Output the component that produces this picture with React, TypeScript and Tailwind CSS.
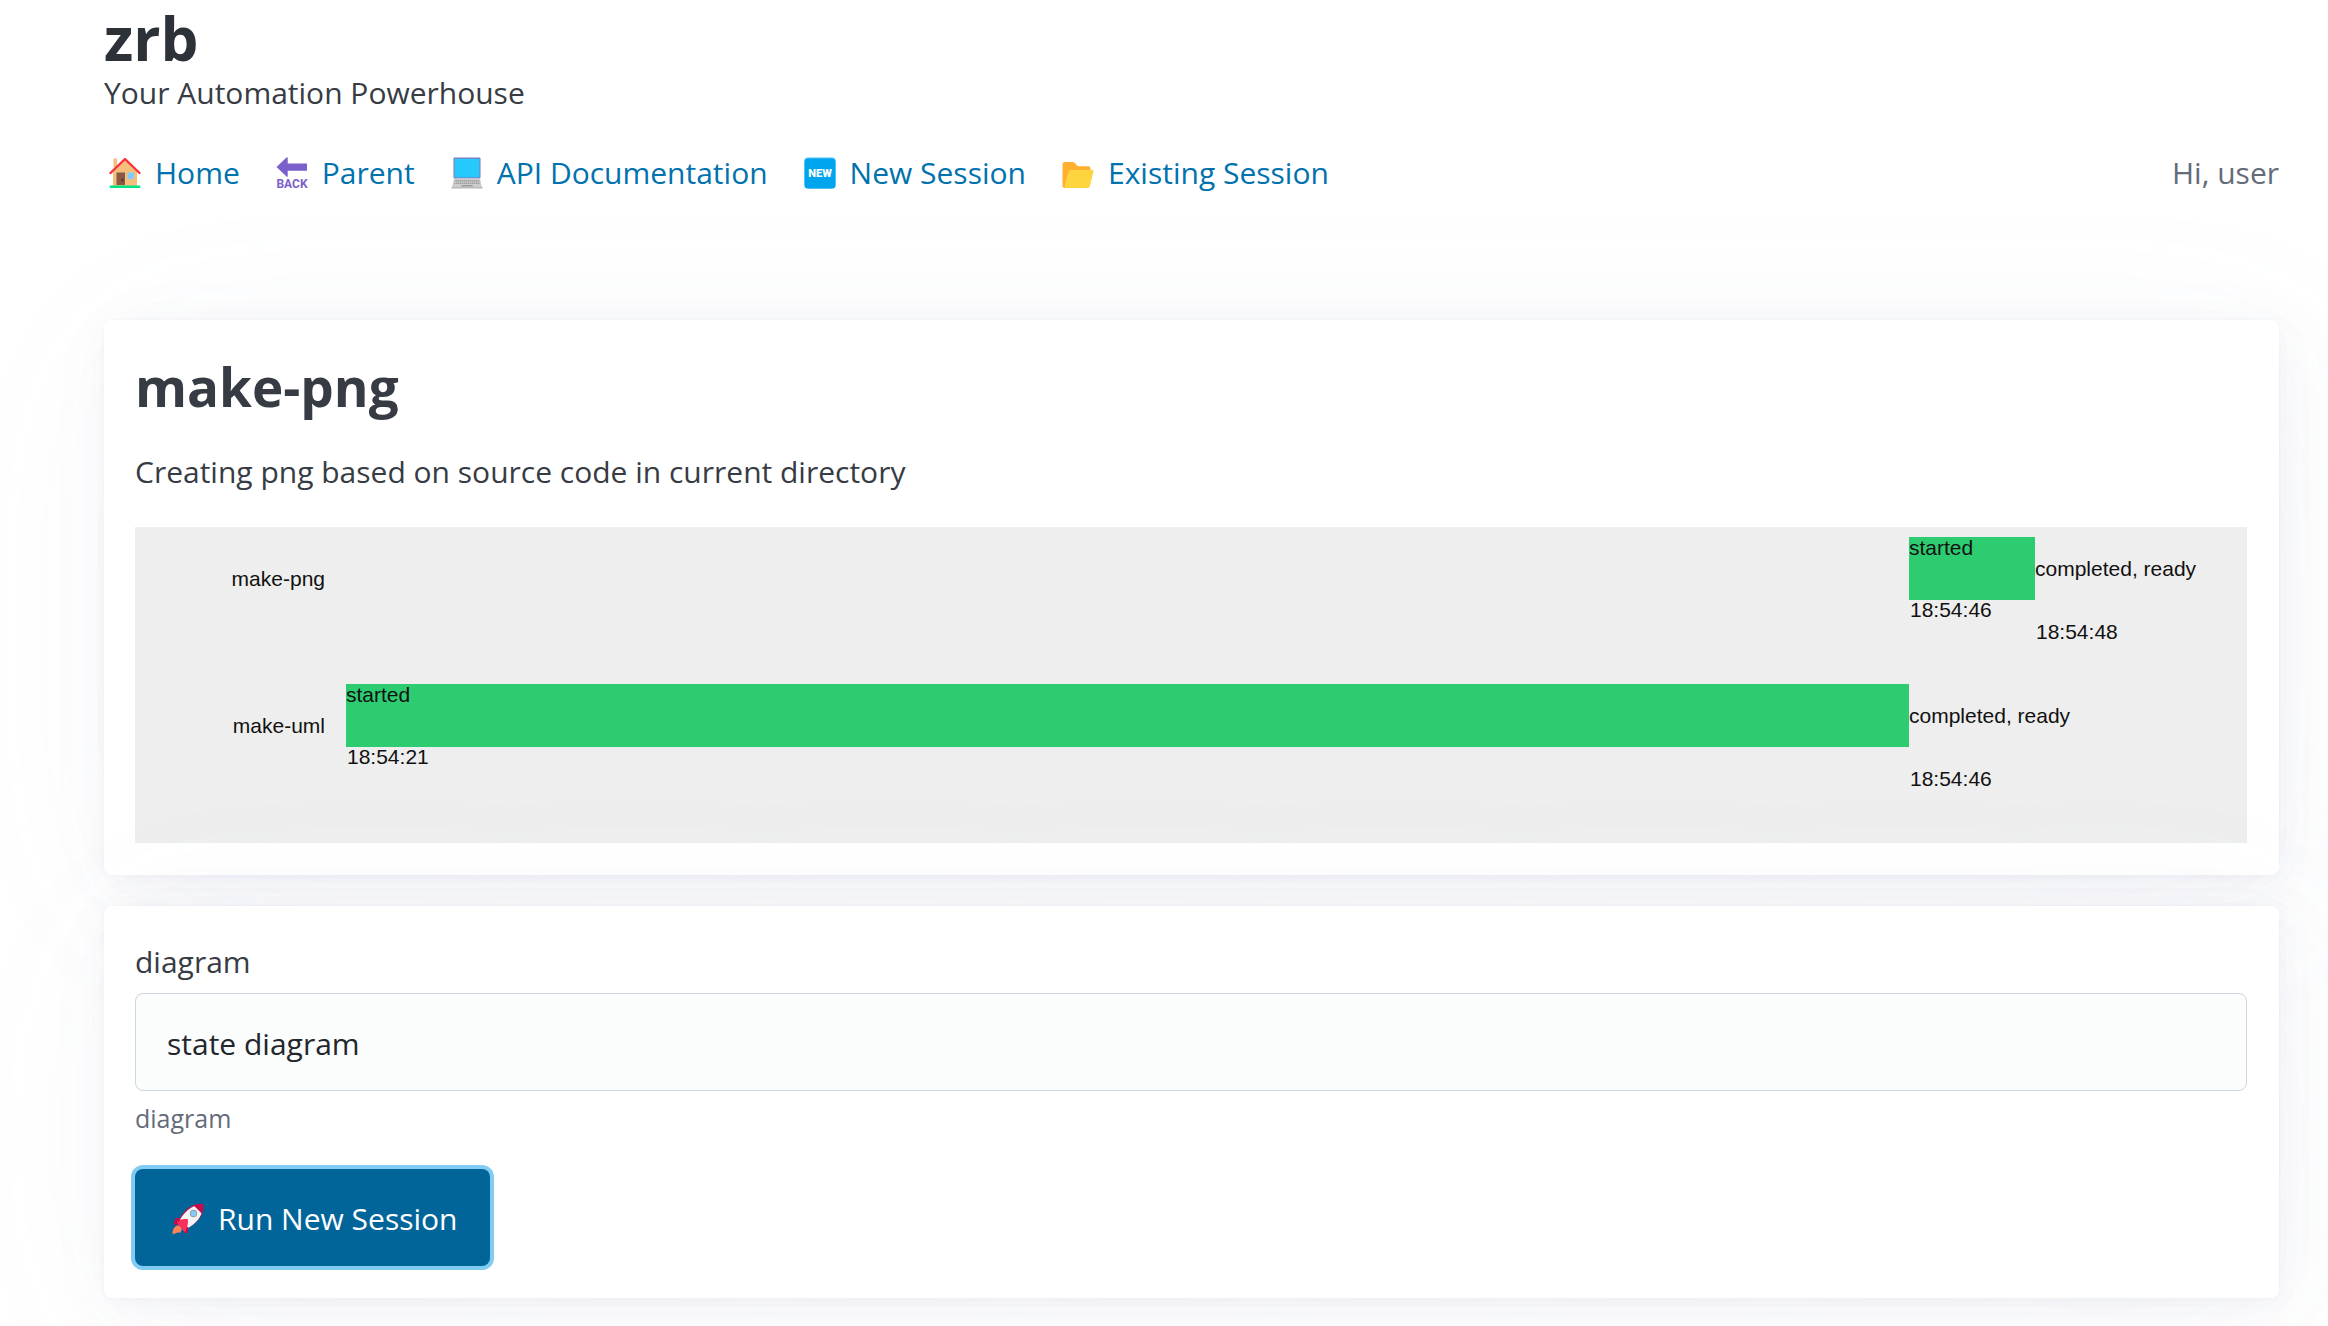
import React from "react";

const CARD =
  "rounded-lg bg-white py-8 pr-8 pl-[31px] shadow-[0_1px_5px_rgba(129,145,181,0.017),1px_2px_13px_rgba(129,145,181,0.024),2px_4px_24px_rgba(129,145,181,0.03),4px_7px_43px_rgba(129,145,181,0.036),7px_13px_79px_rgba(129,145,181,0.043),16px_32px_189px_rgba(129,145,181,0.06),0_0_0_1px_rgba(129,145,181,0.015)]";

function Icon({ children }: { children: React.ReactNode }) {
  return (
    <svg viewBox="0 0 32 32" className="mx-[5px] h-8 w-8 shrink-0 overflow-visible" aria-hidden="true">
      {children}
    </svg>
  );
}

function HomeIcon() {
  return (
    <Icon>
      <path d="M4.5 1.5h3.6v9H4.5z" fill="#f3bf7b" />
      <path d="M4 15 16 3l12 12v14H4z" fill="#f3bf7b" />
      <path d="M1.5 16 16 2l14.500 14" fill="none" stroke="#fb2f3b" strokeWidth="2.400" strokeLinecap="round" strokeLinejoin="round" />
      <path d="M7.500 15.500h8.500V28H7.500z" fill="#8b5742" />
      <path d="M12.500 21.500h2v3h-2z" fill="#5c3a2e" />
      <path d="M18.500 15.500h6.500V22h-6.500z" fill="#83cbff" />
      <rect x="0.500" y="28.500" width="31" height="2.500" rx="1.200" fill="#00e584" />
    </Icon>
  );
}

function BackIcon() {
  return (
    <Icon>
      <path d="M0.500 10 10.500 0.500q1.200-.8 1.200 0.800V6.500H31v7.200H11.700v5.200q0 1.500-1.200 0.700z" fill="#7b5fcb" />
      <text x="16" y="31" textAnchor="middle" fontFamily="Roboto, sans-serif" fontWeight="700" fontSize="12" fill="#7b5fcb">BACK</text>
    </Icon>
  );
}

function LaptopIcon() {
  return (
    <Icon>
      <rect x="2.500" y="0.500" width="27" height="21" rx="1" fill="#8374b8" />
      <path d="M3.500 1.700h25v18.800h-25z" fill="#26c9fc" />
      <path d="M3 21.800h26L31 30H1z" fill="#cdcdcd" />
      <path d="M4 23h24l.7 4H3.300z" fill="#a7a7a7" />
      <path d="M4 24.300h24M3.700 25.700h24.600" stroke="#dedede" strokeWidth="0.700" strokeDasharray="1.300 0.700" />
      <path d="M10.500 28h11l.5 1.600H10z" fill="#9b9b9b" />
      <path d="M0.500 30h31v1.500H0.500z" fill="#b9b9b9" />
    </Icon>
  );
}

function NewIcon() {
  return (
    <Icon>
      <rect x="0.500" y="0.500" width="31" height="31" rx="3.500" fill="#4cc0f8" />
      <rect x="0.500" y="1.500" width="31" height="30" rx="3.500" fill="#00a6ed" />
      <text x="16" y="19.500" textAnchor="middle" fontFamily="Roboto, sans-serif" fontWeight="900" fontSize="11" fill="#ffffff">NEW</text>
    </Icon>
  );
}

function FolderIcon() {
  return (
    <Icon>
      <path d="M0.500 7q0-2 2-2h8q1.200 0 2 .8L16 9.300h10.500q2 0 2 2V14L6 31H3q-2.500 0-2.500-2.500z" fill="#ffb02e" />
      <path d="M8.500 13h22q1.300 0 1 1.400l-3.600 14.800Q27.500 31 25.700 31H3.200q-1 0-.7-1.200L6.400 14.700Q6.800 13 8.500 13z" fill="#fcd53f" />
    </Icon>
  );
}

function RocketIcon() {
  return (
    <Icon>
      <path d="M9 23c1.500 2 0.500 6-1.500 7-1.500-.8-2.800-.2-4 .6-1-.2-2.500.8-3 .4-.3-4 2-7.500 4.500-8.500z" fill="#ff8257" />
      <path d="M10.500 15H4.500c-1.600 0-2.500 3.500-2.800 6.500l6.500 0.500z" fill="#ca0b4a" />
      <path d="M16 22.500V28c0 1.500-1 2.500-3 2.500L9.500 23z" fill="#ca0b4a" />
      <path d="M31 1.200c1.800 7.800-3 16.500-13.500 23L13 27l-7.500-7.500L8.500 14C14.500 4.500 23.500-.5 31 1.200z" fill="#ca0b4a" />
      <path d="M22.500 3.200l7 7c-2 6-6.500 10.500-13 14.500L8 16.500c4-6.500 9-11.500 14.500-13.300z" fill="#f4f4f4" />
      <path d="M5 20l3-3c3-1.200 6.500-1.200 7.800-.8.500 2.500.2 5.500-1 8L13 29.500z" fill="#fb2f5b" />
      <circle cx="21.500" cy="10.500" r="3.700" fill="#9b9b9b" />
      <circle cx="21.500" cy="10.500" r="2.800" fill="#83cbff" />
    </Icon>
  );
}

const links = [
  { label: "Home", icon: <HomeIcon /> },
  { label: "Parent", icon: <BackIcon /> },
  { label: "API Documentation", icon: <LaptopIcon /> },
  { label: "New Session", icon: <NewIcon /> },
  { label: "Existing Session", icon: <FolderIcon /> },
];

const runs = [
  { name: "make-png", top: 10, from: 1774, to: 1900, start: "18:54:46", end: "18:54:48" },
  { name: "make-uml", top: 157, from: 211, to: 1774, start: "18:54:21", end: "18:54:46" },
];

function Timeline() {
  return (
    <svg
      viewBox="0 0 2112 316"
      role="img"
      aria-label="Task timeline"
      className="mt-[31px] block w-full bg-[#eeeeee] font-['Liberation_Sans',Arial,sans-serif] text-[21px]"
    >
      {runs.map((r) => (
        <g key={r.name} fill="#111111">
          <text x="190" y={r.top + 49} textAnchor="end">{r.name}</text>
          <rect x={r.from} y={r.top} width={r.to - r.from} height="63" fill="#2ecc71" />
          <text x={r.from} y={r.top + 18}>started</text>
          <text x={r.from + 1} y={r.top + 80}>{r.start}</text>
          <text x={r.to} y={r.top + 39}>completed, ready</text>
          <text x={r.to + 1} y={r.top + 102}>{r.end}</text>
        </g>
      ))}
    </svg>
  );
}

export default function App() {
  return (
    <div className="min-h-screen bg-white pr-[49px] pb-7 pl-[104px] font-['Open_Sans','Segoe_UI',sans-serif] text-[30px] leading-[48px] text-[#373c44]">
      <header>
        <div className="pt-1">
          <h1 className="text-[60px] leading-[68px] font-bold text-[#2d3138]">zrb</h1>
          <p className="leading-[42px]">Your Automation Powerhouse</p>
        </div>
        <nav className="mt-[35px] flex items-center justify-between">
          <ul className="flex gap-[31px]">
            {links.map((l) => (
              <li key={l.label}>
                <a href="#" className="flex items-center gap-[9px] whitespace-nowrap text-[#0172ad]">
                  {l.icon}
                  {l.label}
                </a>
              </li>
            ))}
          </ul>
          <span className="text-[#646b79]">Hi, user</span>
        </nav>
      </header>

      <main className="mt-[123px] flex flex-col gap-[31px]">
        <article className={CARD}>
          <h2 className="text-[53px] leading-[70px] font-bold">make-png</h2>
          <p className="mt-[26px]">Creating png based on source code in current directory</p>
          <Timeline />
        </article>

        <article className={CARD}>
          <form onSubmit={(e) => e.preventDefault()}>
            <label htmlFor="diagram" className="block">diagram</label>
            <input
              id="diagram"
              type="text"
              defaultValue="state diagram"
              aria-describedby="diagram-help"
              className="mt-[7px] block h-[98px] w-full rounded-lg border border-[#cfd5e2] bg-[#fbfcfc] px-[31px] pt-0.5 text-[#23262c]"
            />
            <small id="diagram-help" className="mt-[9px] block text-[25px] leading-9 text-[#646b79]">diagram</small>
            <button
              type="submit"
              className="mt-[33px] flex h-[97px] items-center gap-[9px] rounded-lg bg-[#02659a] px-8 pt-0.5 text-white ring-4 ring-[#80ccf3]"
            >
              <RocketIcon />
              Run New Session
            </button>
          </form>
        </article>
      </main>
    </div>
  );
}
